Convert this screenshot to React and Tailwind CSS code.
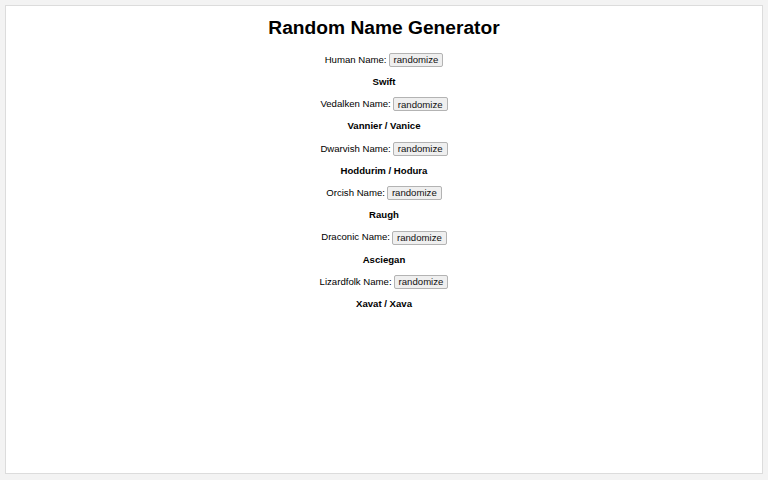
import { useState } from "react";

const races = [
  { label: "Human Name:", name: "Swift" },
  { label: "Vedalken Name:", name: "Vannier / Vanice" },
  { label: "Dwarvish Name:", name: "Hoddurim / Hodura" },
  { label: "Orcish Name:", name: "Raugh" },
  { label: "Draconic Name:", name: "Asciegan" },
  { label: "Lizardfolk Name:", name: "Xavat / Xava" },
];

const RaceRow = ({ label, name }) => {
  const [current] = useState(name);
  return (
    <div>
      <div className="h-[22.2px] flex items-center justify-center gap-[2px]">
        <span>{label}</span>
        <button className="h-[14px] px-[4px] leading-none border border-[#b3b3b3] bg-[#efefef] rounded-[2px] text-[9.6px] text-[#111]">
          randomize
        </button>
      </div>
      <div className="h-[22.2px] flex items-center justify-center font-bold">
        {current}
      </div>
    </div>
  );
};

const App = () => {
  return (
    <div className="h-screen bg-[#f3f3f3] p-[5px] font-['Liberation_Sans',Arial,sans-serif] text-black">
      <div className="h-[469px] w-[758px] bg-white border border-[#dcdcdc] pt-[11px]">
        <h1 className="h-[22px] flex items-center justify-center text-[19.2px] font-bold">
          Random Name Generator
        </h1>
        <div className="mt-[10px] text-[9.6px]">
          {races.map((r) => (
            <RaceRow key={r.label} label={r.label} name={r.name} />
          ))}
        </div>
      </div>
    </div>
  );
};

export default App;
